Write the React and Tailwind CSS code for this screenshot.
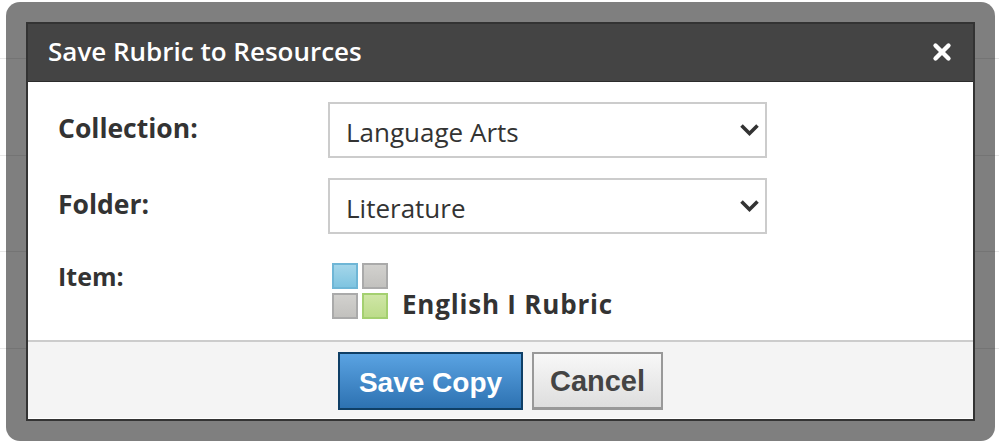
import React from 'react';
import { X } from 'lucide-react';

const Tile = ({ className }) => (
  <span className={`block w-[26px] h-[26px] border-2 ${className}`} />
);

const SelectField = ({ value }) => (
  <div className="relative w-[439px] h-14">
    <select
      defaultValue={value}
      className="w-full h-full appearance-none bg-white border-2 border-[#cccccc] rounded-none pl-4 pr-10 pt-[5px] text-[26px] text-[#333333] outline-none"
    >
      <option>{value}</option>
    </select>
    <svg className="absolute right-[7px] top-[21px] w-[21px] h-[14px]" viewBox="0 0 21 14" fill="none">
      <path d="M2.5 2.5 L10.5 10.5 L18.5 2.5" stroke="#333333" strokeWidth="3.6" />
    </svg>
  </div>
);

const App = () => {
  return (
    <div className="relative w-[999px] h-[444px] overflow-hidden bg-white font-['Open_Sans',sans-serif] text-[#333333]">
      {/* page behind the modal */}
      <div className="flex flex-col">
        <div className="h-[59px] border-b border-[#e8e8e8] flex pl-[402px] gap-[152px] pt-[16px] text-[20px] font-semibold text-[#444444]">
          <span>Website</span>
          <span>Name</span>
        </div>
        <div className="h-[97px] border-b border-[#e8e8e8]" />
        <div className="h-[96px] border-b border-[#e8e8e8]" />
        <div className="h-[97px] border-b border-[#e8e8e8]" />
      </div>

      {/* modal */}
      <div className="absolute left-[6px] top-[2px] w-[989px] h-[439px] rounded-[14px] bg-black/50 pt-5 px-5">
        <div className="w-[949px] h-[399px] border-2 border-[#333333] flex flex-col bg-white">
          <div className="h-[58px] bg-[#444444] flex items-center justify-between pl-5 pr-[18px] border-b border-[#2b2b2b]">
            <h3 className="text-[26px] font-semibold text-white mb-[2px]">Save Rubric to Resources</h3>
            <X className="w-[26px] h-[26px] text-white mb-[2px]" strokeWidth={4} />
          </div>

          <div className="flex-1 pl-[30px] pt-5">
            <div className="flex mb-5">
              <label className="w-[270px] text-[26.5px] font-bold leading-[52px]">Collection:</label>
              <SelectField value="Language Arts" />
            </div>
            <div className="flex mb-[29px]">
              <label className="w-[270px] text-[26.5px] font-bold leading-[52px]">Folder:</label>
              <SelectField value="Literature" />
            </div>
            <div className="flex">
              <label className="w-[270px] text-[25px] font-bold leading-none pt-[1px]">Item:</label>
              <div className="flex items-end pl-[4px] gap-[14px]">
                <div className="grid grid-cols-2 gap-1">
                  <Tile className="bg-gradient-to-b from-[#a4d6ea] to-[#7fc4e0] border-[#6fb6d6]" />
                  <Tile className="bg-gradient-to-b from-[#d2d1ce] to-[#c2c1be] border-[#aaaaaa]" />
                  <Tile className="bg-gradient-to-b from-[#d2d1ce] to-[#c2c1be] border-[#aaaaaa]" />
                  <Tile className="bg-gradient-to-b from-[#cfe6a6] to-[#bcdc8a] border-[#a4d070]" />
                </div>
                <span className="text-[26px] font-bold leading-[30px] tracking-[0.8px]">English I Rubric</span>
              </div>
            </div>
          </div>

          <div className="h-[79px] bg-[#f4f4f4] border-t-2 border-b border-t-[#cccccc] border-b-white flex items-start justify-center gap-[9px] pt-[10px]">
            <button className="w-[185px] h-[58px] border-2 border-[#0f3f66] pt-[3px] bg-gradient-to-b from-[#5aa3e2] to-[#2d72b2] text-white font-['Liberation_Sans',sans-serif] font-bold text-[28px]">
              Save Copy
            </button>
            <button className="w-[131px] h-[58px] border-2 border-b-[3px] border-[#999999] pt-[2px] bg-gradient-to-b from-[#f8f8f8] to-[#dedede] text-[#444444] font-['Liberation_Sans',sans-serif] font-bold text-[29px]">
              Cancel
            </button>
          </div>
        </div>
      </div>
    </div>
  );
};

export default App;
